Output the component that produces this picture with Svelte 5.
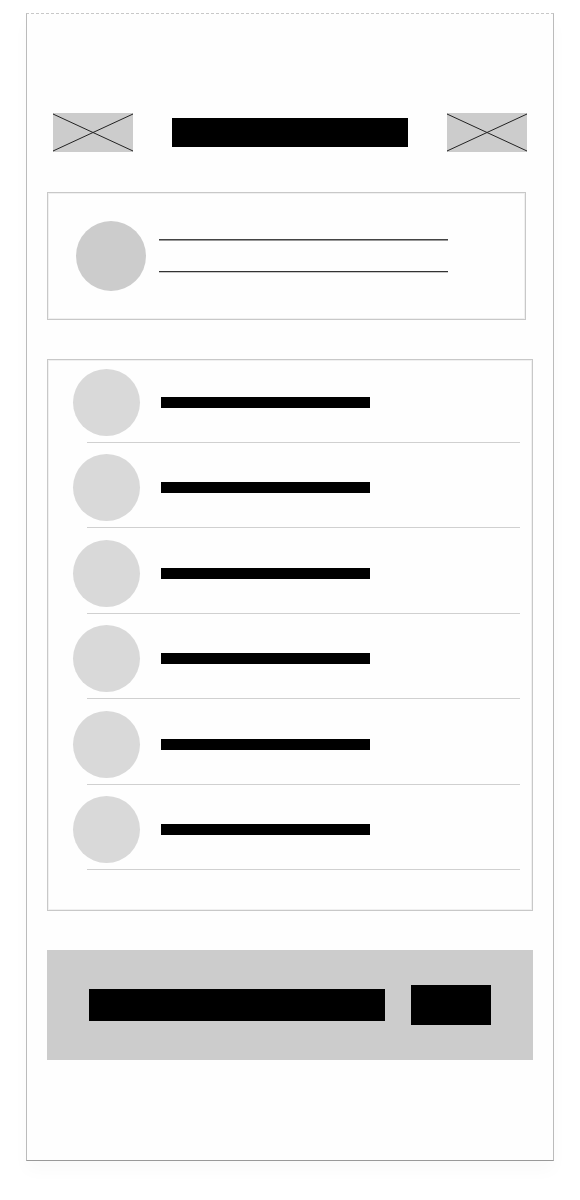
<script>
  const rows = [1, 2, 3, 4, 5, 6];
</script>

{#snippet placeholder(label)}
  <button class="placeholder" type="button" aria-label={label}>
    <svg viewBox="0 0 80 39" preserveAspectRatio="none" aria-hidden="true">
      <path d="M0 1 L80 38 M0 38 L80 1" fill="none" stroke="#222" stroke-width="1" />
    </svg>
  </button>
{/snippet}

<main class="frame">
  <header>
    {@render placeholder('Back')}
    <div class="title"></div>
    {@render placeholder('Menu')}
  </header>

  <section class="profile">
    <div class="avatar"></div>
    <div class="lines">
      <div class="line first"></div>
      <div class="line"></div>
    </div>
  </section>

  <section class="list">
    <ul>
      {#each rows as row (row)}
        <li>
          <div class="item">
            <div class="dot"></div>
            <div class="bar"></div>
          </div>
          <div class="divider"></div>
        </li>
      {/each}
    </ul>
  </section>

  <form class="footer" onsubmit={(e) => e.preventDefault()}>
    <input type="text" aria-label="Message" />
    <button type="submit" aria-label="Send"></button>
  </form>
</main>

<style>
  :global(body) {
    background: #fff;
    font-family: "Liberation Sans", sans-serif;
  }

  :global(#app) {
    display: flow-root;
  }

  * {
    box-sizing: border-box;
  }

  .frame {
    margin: 13px 26px 24px;
    padding: 99px 20px 100px;
    background: #fefefe;
    border: 1px solid #bbb;
    border-top: 1px dashed #c8c8c8;
    border-bottom-color: #999;
    box-shadow: 0 10px 16px rgba(0, 0, 0, 0.025);
  }

  header {
    display: flex;
    align-items: center;
    gap: 39px;
    margin: 0 6px 40px;
  }

  .placeholder {
    flex: none;
    width: 80px;
    height: 39px;
    padding: 0;
    border: 0;
    background: #ccc;
  }

  .placeholder svg {
    display: block;
    width: 100%;
    height: 100%;
  }

  .title {
    flex: 1;
    height: 29px;
    background: #000;
  }

  .profile,
  .list {
    border: 1px solid #c8c8c8;
    box-shadow: inset 0 0 0 1px #f0f0f0;
    margin-bottom: 39px;
  }

  .profile {
    display: flex;
    align-items: center;
    gap: 13px;
    margin-right: 7px;
    padding: 28px 77px 28px 28px;
  }

  .avatar {
    flex: none;
    width: 70px;
    height: 70px;
    border-radius: 50%;
    background: #ccc;
  }

  .lines {
    flex: 1;
    display: flex;
    flex-direction: column;
    gap: 30px;
  }

  .line {
    height: 2px;
    background: #c8c8c8;
    border-top: 1px solid #333;
  }

  .line.first {
    background: #999;
    border-top-color: #444;
  }

  .list {
    padding: 9px 12px 40px 25px;
  }

  ul {
    display: flex;
    flex-direction: column;
    justify-content: space-between;
    min-height: 501px;
    margin: 0;
    padding: 0;
    list-style: none;
  }

  .item {
    display: flex;
    align-items: center;
    gap: 21px;
  }

  .dot {
    flex: none;
    width: 67px;
    height: 67px;
    border-radius: 50%;
    background: #d9d9d9;
  }

  .bar {
    width: 209px;
    height: 11px;
    background: #000;
  }

  .divider {
    height: 1px;
    margin: 6px 0 0 14px;
    background: #d0d0d0;
  }

  .footer {
    display: flex;
    align-items: center;
    gap: 26px;
    padding: 35px 42px;
    background: #ccc;
  }

  .footer input,
  .footer button {
    padding: 0;
    border: 0;
    border-radius: 0;
    background: #000;
  }

  .footer input {
    flex: 1;
    min-width: 0;
    height: 32px;
    padding: 0 10px;
    color: #fff;
    font: inherit;
  }

  .footer button {
    flex: none;
    width: 80px;
    height: 40px;
  }
</style>
